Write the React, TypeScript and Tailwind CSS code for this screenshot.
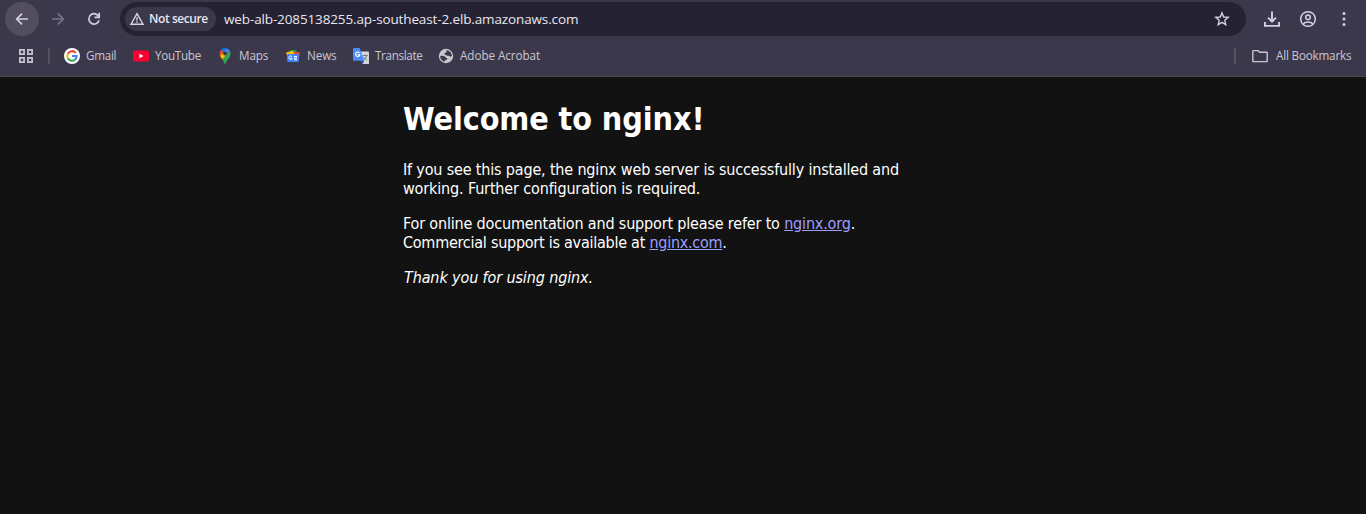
import type { ReactNode } from "react";

function BackArrow() {
  return (
    <svg width="20" height="20" viewBox="0 0 20 20" fill="none" stroke="#d3cee4" strokeWidth="1.7">
      <path d="M16 10H5M10 4.6 4.7 10l5.3 5.4" />
    </svg>
  );
}

function ForwardArrow() {
  return (
    <svg width="20" height="20" viewBox="0 0 20 20" fill="none" stroke="#77738a" strokeWidth="1.7">
      <path d="M4 10h11M10 4.6l5.3 5.4-5.3 5.4" />
    </svg>
  );
}

function Reload() {
  return (
    <svg width="20" height="20" viewBox="0 0 20 20" fill="none" stroke="#d3cee4" strokeWidth="1.7">
      <path d="M14.9 7.9A5.2 5.2 0 1 0 15.1 11.2" />
      <path d="M15.2 3.8v4.6h-4.7" />
    </svg>
  );
}

function Warning() {
  return (
    <svg width="16" height="16" viewBox="0 0 16 16" fill="none" stroke="#d8d6e0" strokeWidth="1.4">
      <path d="M8 2.6 14 13.2H2Z" />
      <path d="M8 6.3v3.2M8 10.3v1.5" />
    </svg>
  );
}

function Star() {
  return (
    <svg width="16" height="16" viewBox="0 0 16 16" fill="none" stroke="#d3cee4" strokeWidth="1.4">
      <path d="M8 1.9 9.7 6l4.5.4-3.4 2.9 1 4.4L8 11.4l-3.8 2.3 1-4.4-3.4-2.9L6.3 6Z" />
    </svg>
  );
}

function Download() {
  return (
    <svg width="20" height="20" viewBox="0 0 20 20" fill="none" stroke="#d3cee4" strokeWidth="1.9">
      <path d="M10 2.5v9.8M6 8.6l4 4 4-4" />
      <path d="M2.9 13v3.9h14.2V13" />
    </svg>
  );
}

function Profile() {
  return (
    <svg width="20" height="20" viewBox="0 0 20 20" fill="none" stroke="#d3cee4" strokeWidth="1.5">
      <circle cx="10" cy="10" r="7.3" />
      <circle cx="10" cy="8.2" r="2.3" />
      <path d="M5 15.1c1.2-1.5 3-2.2 5-2.2s3.8.7 5 2.2" />
    </svg>
  );
}

function Apps() {
  return (
    <svg width="16" height="16" viewBox="0 0 16 16" fill="none" stroke="#c9c5d6" strokeWidth="1.7">
      <path d="M1.9 1.9h4.2v4.2H1.9ZM9.9 1.9h4.2v4.2H9.9ZM1.9 9.9h4.2v4.2H1.9ZM9.9 9.9h4.2v4.2H9.9Z" />
    </svg>
  );
}

function Google() {
  return (
    <svg width="16" height="16" viewBox="0 0 16 16">
      <circle cx="8" cy="8" r="8" fill="#fff" />
      <g fill="none" strokeWidth="2.1">
        <path d="M11.7 4.9A4.7 4.7 0 0 0 3.9 5.7" stroke="#ea4335" />
        <path d="M3.9 5.7A4.7 4.7 0 0 0 3.9 10.3" stroke="#fbbc05" />
        <path d="M3.9 10.3A4.7 4.7 0 0 0 11.1 11.6" stroke="#34a853" />
        <path d="M11.1 11.6A4.7 4.7 0 0 0 12.7 8H8" stroke="#4285f4" />
      </g>
    </svg>
  );
}

function YouTube() {
  return (
    <svg width="16" height="16" viewBox="0 0 16 16">
      <rect x="0" y="2.4" width="16" height="11.2" rx="2.6" fill="#ff0033" />
      <path d="M6.4 5.7 10.5 8l-4.1 2.3Z" fill="#fff" />
    </svg>
  );
}

function Maps() {
  return (
    <svg width="16" height="16" viewBox="0 0 16 16">
      <path d="M8 0C6.3 0 4.8.8 3.8 2L6.2 4 9.6.2C9.1.1 8.6 0 8 0Z" fill="#1a73e8" />
      <path d="M3.8 2A5.5 5.5 0 0 0 2.5 5.5c0 1 .2 1.9.5 2.6L6.6 4Z" fill="#ea4335" />
      <path d="M9.6.2 6.2 4.1 9.6 7l3.1-4.3A5.5 5.5 0 0 0 9.6.2Z" fill="#4285f4" />
      <path d="M3 8.1c.6 1.3 1.6 2.3 2.5 3.5L9.7 6.8 6.3 4.2Z" fill="#fbbc04" />
      <path d="M12.7 2.7 5.5 11.6c.9 1.3 1.5 2.6 1.8 3.6.3 1 1.1 1 1.4 0 1-3.4 4.8-5.3 4.8-9.7 0-1-.3-2-.8-2.8Z" fill="#34a853" />
      <circle cx="8" cy="5.5" r="2" fill="#3c384b" />
    </svg>
  );
}

function News() {
  return (
    <svg width="16" height="16" viewBox="0 0 16 16">
      <path d="M5 2.5 11.5 2v5H5Z" fill="#0c9d58" />
      <path d="m1 4.5 7-2 2 5-7 3Z" fill="#fbbc04" />
      <path d="m10 3.500 5 1-1 5-6-2Z" fill="#ea4335" />
      <rect x="2.2" y="6" width="11.7" height="8" rx="1" fill="#4285f4" />
      <path d="M7 8.7A1.7 1.7 0 1 0 7.2 10.3H5.7M9 8.5h3M9 10.1h3M9 11.7h3" fill="none" stroke="#fff" />
    </svg>
  );
}

function Translate() {
  return (
    <svg width="16" height="16" viewBox="0 0 16 16">
      <path d="M6 3.500h9.2a.8.8 0 0 1 .8.8v11a.8.8 0 0 1-.8.8H9.500Z" fill="#d5d7da" />
      <path d="M9.5 16 7.5 12.5H11.5Z" fill="#1a56c8" />
      <path d="M1 0h5.7l4.600 12.700H1a1 1 0 0 1-1-1V1a1 1 0 0 1 1-1Z" fill="#4c8bf5" />
      <path d="M6.5 4.9A2.2 2.2 0 1 0 6.9 6.6H4.7" fill="none" stroke="#fff" strokeWidth="1.1" />
      <path d="M9.7 7.5h5.2M12.3 6.3v1.2M13.8 7.5c-.4 1.9-1.6 3.500-3 4.500M10.9 8.8c.8 1.600 1.900 2.700 3.300 3.600" fill="none" stroke="#6c7883" strokeWidth=".9" />
    </svg>
  );
}

function Globe() {
  return (
    <svg width="16" height="16" viewBox="0 0 16 16">
      <circle cx="8" cy="8" r="7.2" fill="#c8c7ce" />
      <path
        d="M2.200 8c1.600-.3 3.500-.2 4.700.5.800.5.700 1.300 1.500 1.500 1 .2 1.200.9.600 1.500-.7.700-1.700.5-2.300 1.200l-.4 1C3.700 12.900 2 10.700 2.200 8ZM8.600 2.200c3.100.3 5.300 2.800 5.300 5.800-.8.700-1.600.8-2.300.2-.6-.6-1.400-.4-2.200-.5-1.100-.1-1.500-.9-2.400-1.100-.9-.3-.8-1.300 0-1.600.9-.3 1.500-.5 1.500-1.200 0-.6-.3-1 .1-1.600Z"
        fill="#3c384b"
      />
    </svg>
  );
}

function Folder() {
  return (
    <svg width="16" height="16" viewBox="0 0 16 16" fill="none" stroke="#c9c5d6" strokeWidth="1.4" strokeLinejoin="round">
      <path d="M.8 13V3.2q0-.6.6-.6H6l1.600 1.700h7q.6 0 .6.6V13q0 .6-.6.6H1.400q-.6 0-.6-.6Z" />
    </svg>
  );
}

function Bookmark({ icon, width, children }: { icon: ReactNode; width: string; children: ReactNode }) {
  return (
    <a className={`flex shrink-0 items-center gap-1.5 whitespace-nowrap ${width}`}>
      <span className="size-4 shrink-0">{icon}</span>
      {children}
    </a>
  );
}

export default function App() {
  return (
    <div className="flex h-[514px] w-[1366px] flex-col overflow-hidden bg-[#121212]">
      <header className="h-[77px] shrink-0 border-b border-[#4b494f] bg-[#3c384b] font-['Open_Sans',sans-serif]">
        <div className="flex h-[38px] items-center pl-[5px]">
          <button className="flex size-[34px] items-center justify-center rounded-full bg-[#524e5e]">
            <BackArrow />
          </button>
          <button className="ml-[9px]"><ForwardArrow /></button>
          <button className="ml-4"><Reload /></button>
          <div className="ml-4 flex h-[34px] w-[1126px] items-center rounded-full bg-[#252233] pr-4 pl-[5px]">
            <span className="flex h-6 w-[91px] items-center gap-1 rounded-full bg-[#3c384b] pl-1 text-[12px] font-semibold tracking-[-0.42px] whitespace-nowrap text-[#e8e6ee]">
              <Warning />
              Not secure
            </span>
            <span className="ml-2 flex-1 text-[13.5px] tracking-[-0.13px] text-[#e8e6ee]">
              web-alb-2085138255.ap-southeast-2.elb.amazonaws.com
            </span>
            <Star />
          </div>
          <button className="ml-4"><Download /></button>
          <button className="ml-4"><Profile /></button>
          <button className="ml-4">
            <svg width="20" height="20" viewBox="0 0 20 20" fill="#d3cee4">
              <circle cx="10" cy="4.5" r="1.5" />
              <circle cx="10" cy="10" r="1.5" />
              <circle cx="10" cy="15.5" r="1.5" />
            </svg>
          </button>
        </div>
        <nav className="flex h-9 items-center pl-[18px] text-[11.7px] text-[#c9c6d2]">
          <Apps />
          <span className="mr-3.5 ml-3.5 h-4 w-0.5 shrink-0 bg-[#55515f]" />
          <Bookmark icon={<Google />} width="w-[69px] tracking-[-0.3px]">Gmail</Bookmark>
          <Bookmark icon={<YouTube />} width="w-[84px] tracking-[-0.3px]">YouTube</Bookmark>
          <Bookmark icon={<Maps />} width="w-[68px] tracking-[-0.1px]">Maps</Bookmark>
          <Bookmark icon={<News />} width="w-[68px] tracking-[-0.1px]">News</Bookmark>
          <Bookmark icon={<Translate />} width="w-[85px] tracking-[-0.35px]">Translate</Bookmark>
          <Bookmark icon={<Globe />} width="tracking-[-0.06px]">Adobe Acrobat</Bookmark>
          <span className="mr-4 ml-auto h-4 w-0.5 shrink-0 bg-[#55515f]" />
          <a className="flex w-[114px] items-center gap-2 tracking-[-0.2px] whitespace-nowrap">
            <Folder />
            All Bookmarks
          </a>
        </nav>
      </header>
      <main className="ml-[403px] pt-[23px] font-['DejaVu_Sans_Condensed',sans-serif] text-base leading-[19px] whitespace-nowrap text-white">
        <h1 className="text-[32px] leading-[38px] font-bold tracking-[-0.1px]">Welcome to nginx!</h1>
        <p className="mt-[22px]">
          <span className="tracking-[-0.17px]">If you see this page, the nginx web server is successfully installed and</span>
          <br />
          <span className="tracking-[-0.15px]">working. Further configuration is required.</span>
        </p>
        <p className="mt-4">
          <span className="tracking-[-0.17px]">
            For online documentation and support please refer to <a className="text-[#9e9eff] underline">nginx.org</a>.
          </span>
          <br />
          <span className="tracking-[-0.25px]">
            Commercial support is available at <a className="text-[#9e9eff] underline">nginx.com</a>.
          </span>
        </p>
        <p className="mt-4 ml-px tracking-[-0.12px] italic">Thank you for using nginx.</p>
      </main>
    </div>
  );
}
